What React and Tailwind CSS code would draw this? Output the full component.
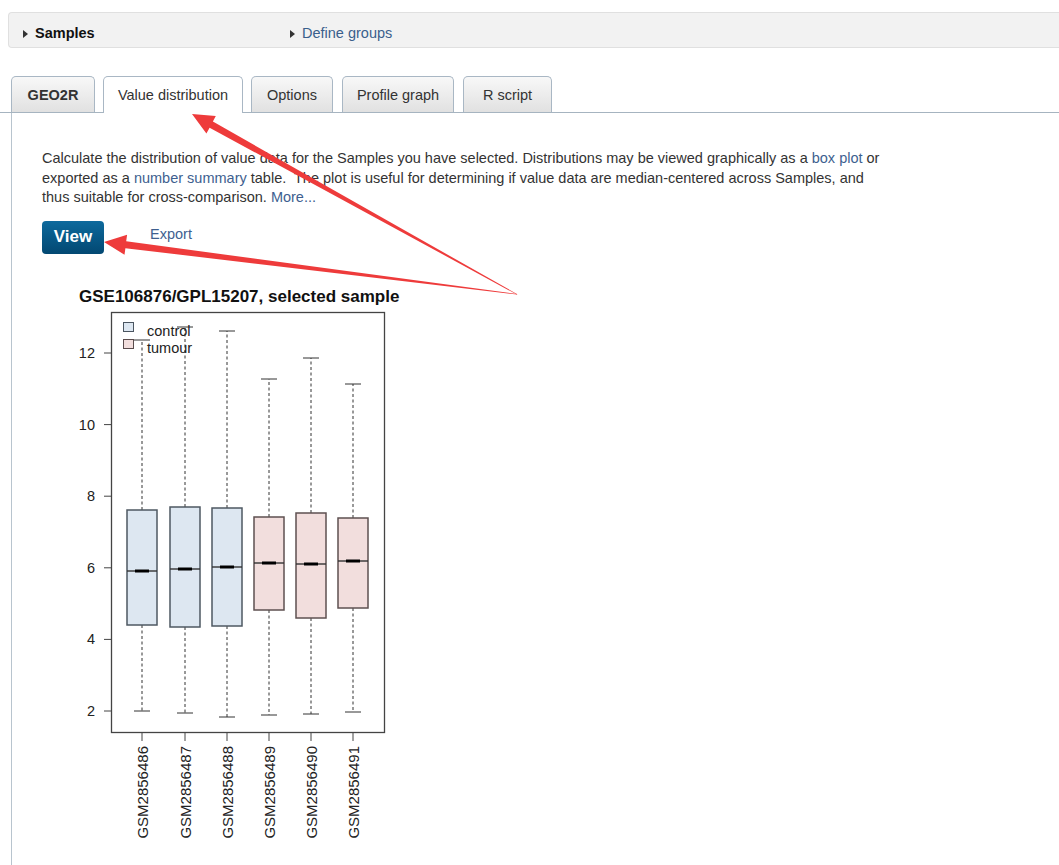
import React from "react";

const Y = (v) => 710 - (v - 2) * 35.8;

const boxes = [
  { id: "GSM2856486", x: 142, lo: 710, q1: 624, med: 570, q3: 509, hi: 339, g: "c" },
  { id: "GSM2856487", x: 185, lo: 712, q1: 626, med: 568, q3: 506, hi: 326, g: "c" },
  { id: "GSM2856488", x: 227, lo: 716, q1: 625, med: 566, q3: 507, hi: 330, g: "c" },
  { id: "GSM2856489", x: 269, lo: 714, q1: 609, med: 562, q3: 516, hi: 378, g: "t" },
  { id: "GSM2856490", x: 311, lo: 713, q1: 617, med: 563, q3: 512, hi: 357, g: "t" },
  { id: "GSM2856491", x: 353, lo: 711, q1: 607, med: 560, q3: 517, hi: 383, g: "t" },
];

function Chart() {
  return (
    <svg
      width="352"
      height="570"
      viewBox="60 280 352 570"
      className="block"
      style={{ fontFamily: "'Liberation Sans', Arial, sans-serif" }}
    >
      <text x="79" y="301" fontSize="17" fontWeight="bold" fill="#111">
        GSE106876/GPL15207, selected sample
      </text>
      {boxes.map((b) => (
        <g key={b.id + "w"} stroke="#333" strokeWidth="1" fill="none">
          <line x1={b.x} y1={b.q3} x2={b.x} y2={b.hi} strokeDasharray="3 2.5" />
          <line x1={b.x} y1={b.q1} x2={b.x} y2={b.lo} strokeDasharray="3 2.5" />
          <line x1={b.x - 8} y1={b.hi} x2={b.x + 8} y2={b.hi} />
          <line x1={b.x - 8} y1={b.lo} x2={b.x + 8} y2={b.lo} />
        </g>
      ))}
      {boxes.map((b) => (
        <g key={b.id + "b"}>
          <rect
            x={b.x - 15}
            y={b.q3}
            width="30"
            height={b.q1 - b.q3}
            fill={b.g === "c" ? "#dde7f1" : "#f2dedd"}
            stroke={b.g === "c" ? "#4e5862" : "#5e5050"}
            strokeWidth="1.5"
          />
          <line x1={b.x - 15} y1={b.med} x2={b.x + 15} y2={b.med} stroke="#333" strokeWidth="1.4" />
          <line x1={b.x - 7} y1={b.med} x2={b.x + 7} y2={b.med} stroke="#000" strokeWidth="3" />
        </g>
      ))}
      <rect x="123.5" y="321.5" width="10" height="9" fill="#dde7f1" stroke="#4a5560" strokeWidth="1" />
      <rect x="123.5" y="338.5" width="10" height="9" fill="#f2dedd" stroke="#5a4c4c" strokeWidth="1" />
      <text x="147" y="335" fontSize="14.5" fill="#222">control</text>
      <text x="147" y="352" fontSize="14.5" fill="#222">tumour</text>
      <rect x="111.5" y="311.5" width="273" height="420" fill="none" stroke="#444" strokeWidth="1.3" />
      {[2, 4, 6, 8, 10, 12].map((v) => (
        <g key={v}>
          <line x1="104" y1={Y(v)} x2="111.5" y2={Y(v)} stroke="#444" strokeWidth="1" />
          <text x="95" y={Y(v) + 5} fontSize="14.5" textAnchor="end" fill="#222">
            {v}
          </text>
        </g>
      ))}
      {boxes.map((b) => (
        <g key={b.id + "x"}>
          <line x1={b.x} y1="732" x2={b.x} y2="740" stroke="#444" strokeWidth="1" />
          <text
            x={b.x + 5.5}
            y="745"
            fontSize="15"
            fill="#222"
            textAnchor="end"
            transform={`rotate(-90 ${b.x + 5.5} 745)`}
          >
            {b.id}
          </text>
        </g>
      ))}
    </svg>
  );
}

function Arrows() {
  return (
    <svg
      className="absolute left-0 top-0 pointer-events-none"
      width="1059"
      height="865"
      viewBox="0 0 1059 865"
    >
      <polygon
        points="517.3,294.2 212.9,121.6 215.8,115.9 192,114 206.4,133.5 209.6,127.7 516.8,294.6"
        fill="#ee3b3b"
      />
      <polygon
        points="517.2,294.0 126.2,241.3 127.1,234.8 104,242 124.5,254.7 125.4,248.2 517,294.6"
        fill="#ee3b3b"
      />
    </svg>
  );
}

function Tab({ w, active, bold, children }) {
  return (
    <div
      className={
        "flex items-center justify-center pt-[2px] rounded-t-[5px] border border-b-0 border-[#a9b7c4] text-[14.5px] " +
        (active
          ? "bg-white h-[37px] -mb-px relative z-10 text-[#333]"
          : "bg-linear-to-b from-[#f8f8f8] to-[#e1e1e1] h-[36px] text-[#333]") +
        (bold ? " font-bold text-[#1d3354]" : "")
      }
      style={{ width: w }}
    >
      {children}
    </div>
  );
}

export default function App() {
  return (
    <div className="w-[1059px] h-[865px] relative overflow-hidden bg-white font-['Liberation_Sans',Arial,sans-serif] text-[#333] flex flex-col">
      <div className="pt-[12px] pl-[8px]">
        <div className="h-[36px] bg-[#f2f2f2] border border-r-0 border-[#e0e0e0] rounded-l-[4px] flex items-center pt-[7px] text-[14.5px]">
          <div className="flex items-center ml-[14px] w-[267px]">
            <span className="inline-block w-0 h-0 border-y-[4px] border-y-transparent border-l-[5px] border-l-[#333] mr-[7px]"></span>
            <span className="font-bold text-[#111]">Samples</span>
          </div>
          <div className="flex items-center">
            <span className="inline-block w-0 h-0 border-y-[4px] border-y-transparent border-l-[5px] border-l-[#333] mr-[7px]"></span>
            <span className="text-[#3a5f8c]">Define groups</span>
          </div>
        </div>
      </div>

      <div className="mt-[28px] pl-[11px] flex items-end border-b border-[#a6b4c0]">
        <Tab w={84} bold>GEO2R</Tab>
        <div className="w-[8px]"></div>
        <Tab w={140} active>Value distribution</Tab>
        <div className="w-[8px]"></div>
        <Tab w={82}>Options</Tab>
        <div className="w-[9px]"></div>
        <Tab w={112}>Profile graph</Tab>
        <div className="w-[9px]"></div>
        <Tab w={89}>R script</Tab>
      </div>

      <div className="ml-[11px] flex-1 border-l border-[#b8c4ce] pl-[30px] pt-[36px]">
        <p className="text-[14.5px] leading-[19.5px] text-[#333]">
          Calculate the distribution of value data for the Samples you have selected. Distributions may be viewed graphically as a{" "}
          <span className="text-[#3e5f8f]">box plot</span> or
          <br />
          exported as a <span className="text-[#3e5f8f]">number summary</span> table.&nbsp; The plot is useful for determining if value data are median-centered across Samples, and
          <br />
          thus suitable for cross-comparison. <span className="text-[#3e5f8f]">More...</span>
        </p>
        <div className="mt-[13px] flex items-center">
          <div className="w-[62px] h-[33px] rounded-[4px] bg-linear-to-b from-[#0e6a9d] to-[#034872] text-white font-bold text-[17px] flex items-center justify-center">
            View
          </div>
          <span className="ml-[46px] mb-[5px] text-[14.5px] text-[#3e5f8f]">Export</span>
        </div>
        <div className="mt-[27px] ml-[18px]">
          <Chart />
        </div>
      </div>

      <Arrows />
    </div>
  );
}
